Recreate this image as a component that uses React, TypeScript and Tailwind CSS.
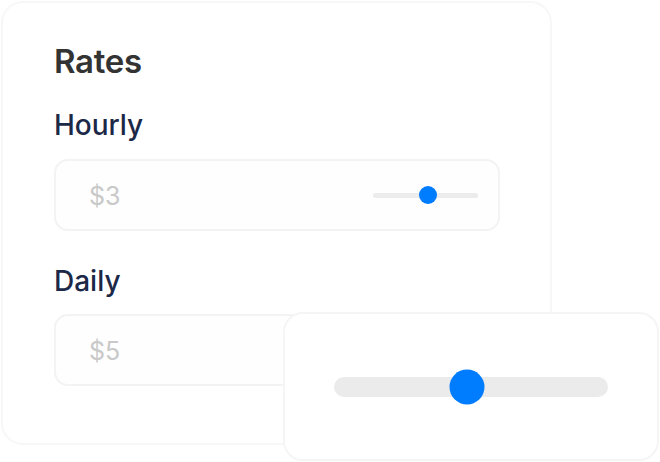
import React from 'react'

function MiniSlider({ value }: { value: number }) {
  return (
    <div className="relative h-[5px] w-[105px] rounded-full bg-[#ececec]">
      <div
        className="absolute top-1/2 h-[18px] w-[18px] -translate-x-1/2 -translate-y-1/2 rounded-full bg-[#007cff]"
        style={{ left: `${value}%` }}
      />
    </div>
  )
}

function RateInput({ amount, slider }: { amount: string; slider?: boolean }) {
  return (
    <div className="flex h-[72px] items-center justify-between rounded-[14px] border-2 border-[#f3f3f3] bg-[#fefefe] pl-[33px] pr-[20px]">
      <span className="pt-[3px] text-[25px] leading-none text-[#c9c9c9]">{amount}</span>
      {slider && <MiniSlider value={52} />}
    </div>
  )
}

export default function App() {
  return (
    <div
      className="relative h-[462px] w-[660px] overflow-hidden bg-white"
      style={{ fontFamily: 'Inter, "Noto Sans", sans-serif' }}
    >
      <div className="ml-[1px] mt-[1px] h-[444px] w-[551px] rounded-[22px] border-2 border-[#f7f7f7] bg-white pl-[51px] pr-[50px] pt-[38px]">
        <h1 className="text-[33px] font-semibold leading-[40px] tracking-[-0.3px] text-[#333333]">Rates</h1>

        <div className="mt-[27px] text-[28px] font-medium leading-[34px] text-[#1c2847]">Hourly</div>
        <div className="mt-[17px]">
          <RateInput amount="$3" slider />
        </div>

        <div className="mt-[33px] text-[28px] font-medium leading-[34px] text-[#1c2847]">Daily</div>
        <div className="mt-[16px]">
          <RateInput amount="$5" />
        </div>
      </div>

      <div className="absolute left-[283px] top-[312px] flex h-[149px] w-[376px] items-center rounded-[20px] border-2 border-[#f5f5f5] bg-white px-[49px]">
        <div className="relative h-[20px] w-full rounded-full bg-[#ebebeb]">
          <div
            className="absolute top-1/2 h-[35px] w-[35px] -translate-x-1/2 -translate-y-1/2 rounded-full bg-[#007cff]"
            style={{ left: '48.4%' }}
          />
        </div>
      </div>
    </div>
  )
}
